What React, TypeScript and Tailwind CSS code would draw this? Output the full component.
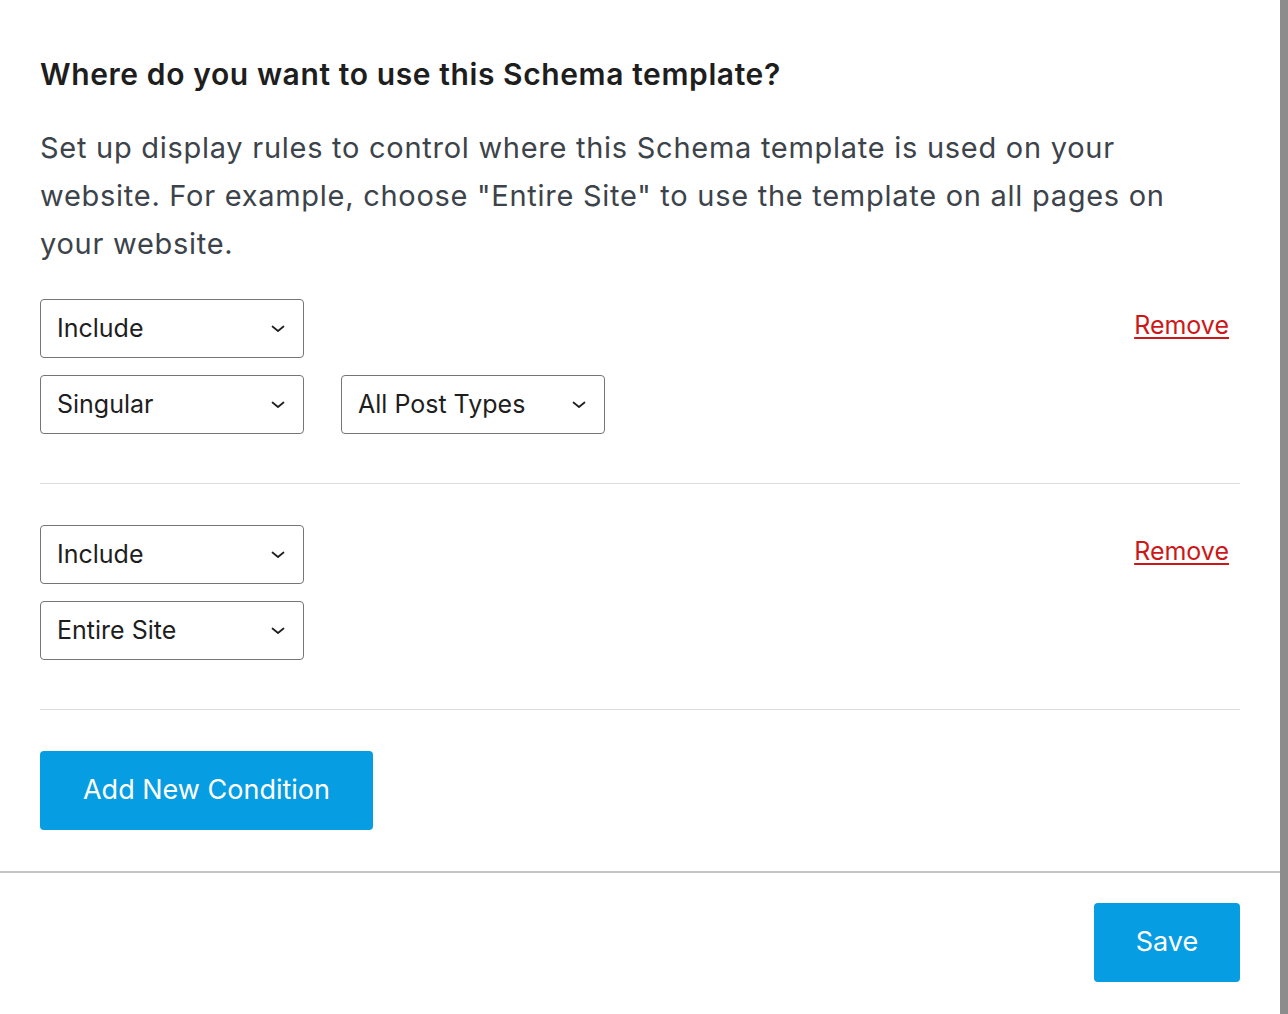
const font = { fontFamily: 'Inter, "Liberation Sans", sans-serif' };

function Chevron() {
  return (
    <svg width="16" height="16" viewBox="0 0 16 16" fill="none" className="shrink-0">
      <path d="M2.5 5.5l5.5 4.5 5.5-4.5" stroke="#1e1e1e" strokeWidth="1.7" strokeLinecap="round" strokeLinejoin="round" />
    </svg>
  );
}

function Select({ label }: { label: string }) {
  return (
    <div className="flex h-[59px] w-[264px] items-center justify-between rounded-[4px] border border-[#757575] bg-white pl-[16px] pr-[17px] text-[25px] text-[#1e1e1e]">
      <span>{label}</span>
      <Chevron />
    </div>
  );
}

function Rule({ rows }: { rows: string[][] }) {
  return (
    <div className="flex items-start justify-between">
      <div className="flex flex-col gap-[17px]">
        {rows.map((row, i) => (
          <div key={i} className="flex gap-[37px]">
            {row.map((l) => (
              <Select key={l} label={l} />
            ))}
          </div>
        ))}
      </div>
      <a href="#" className="mr-[11px] mt-[9px] text-[25px] leading-[34px] text-[#cc1818] underline underline-offset-[3px] decoration-[1.5px]">
        Remove
      </a>
    </div>
  );
}

export default function App() {
  return (
    <div className="flex h-[1014px] w-full bg-white" style={font}>
      <div className="flex flex-1 flex-col">
        <div className="px-[40px]">
          <h2 className="mt-[55px] text-[30px] font-semibold leading-[38px] tracking-[0.02em] text-[#1e1e1e]">
            Where do you want to use this Schema template?
          </h2>
          <p className="mt-[31px] max-w-[1150px] text-[29px] leading-[48px] tracking-[0.025em] text-[#3c434a]">
            Set up display rules to control where this Schema template is used on your website. For example, choose "Entire Site" to use the template on all pages on your website.
          </p>
          <div className="mt-[31px] border-b border-[#dcdcde] pb-[49px]">
            <Rule rows={[["Include"], ["Singular", "All Post Types"]]} />
          </div>
          <div className="border-b border-[#dcdcde] pb-[49px] pt-[41px]">
            <Rule rows={[["Include"], ["Entire Site"]]} />
          </div>
          <button className="mt-[41px] h-[79px] w-[333px] rounded-[4px] bg-[#069de3] text-[27px] text-white">
            Add New Condition
          </button>
        </div>
        <div className="mt-[41px] flex justify-end border-t-2 border-[#c3c4c7] px-[40px] pt-[30px]">
          <button className="h-[79px] w-[146px] rounded-[4px] bg-[#069de3] text-[27px] text-white">Save</button>
        </div>
      </div>
      <div className="w-[8px] bg-[#8c8c8c]" />
    </div>
  );
}
